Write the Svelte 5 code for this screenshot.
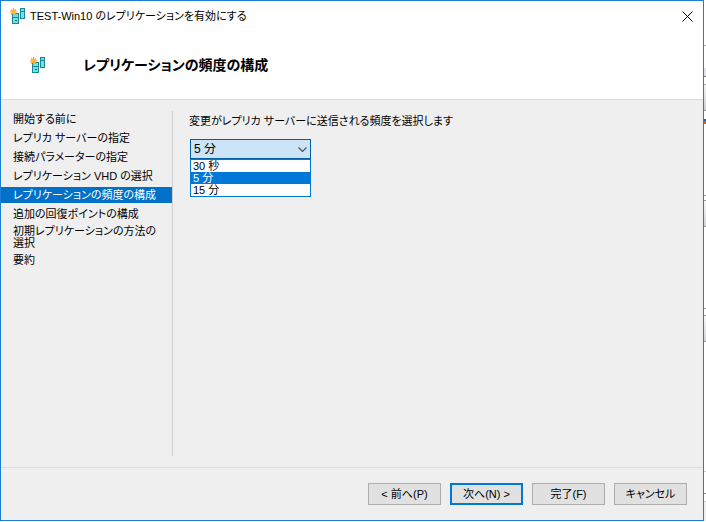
<script lang="ts">
	const steps = [
		"開始する前に",
		"レプリカ サーバーの指定",
		"接続パラメーターの指定",
		"レプリケーション VHD の選択",
		"レプリケーションの頻度の構成",
		"追加の回復ポイントの構成",
		"初期レプリケーションの方法の選択",
		"要約",
	];
	const frequencies = ["30 秒", "5 分", "15 分"];

	let step = $state(4);
	let frequency = $state("5 分");
	let open = $state(true);

	function choose(value: string) {
		frequency = value;
		open = false;
	}
</script>

{#snippet serverIcon()}
	<svg class="server-icon" viewBox="0 0 16 16" aria-hidden="true">
		<rect x="2.5" y="5.5" width="6" height="10" fill="#6be3ec" stroke="#1f8591" />
		<path d="M3 9.5h5" stroke="#1f8591" />
		<rect x="5" y="12" width="2" height="1" fill="#17606b" />
		<rect x="10.5" y="0.5" width="4" height="10" fill="#6be3ec" stroke="#1f8591" />
		<path d="M11 3.5h3" stroke="#1f8591" />
		<path d="M3.5 0v8M0 4h7M1 1.5l5 5M6 1.5l-5 5" stroke="#f2a21f" stroke-width="1.2" />
		<circle cx="3.5" cy="4" r="2" fill="#ffb62e" />
	</svg>
{/snippet}

<div class="desktop">
	<main class="window">
		<div class="titlebar">
			{@render serverIcon()}
			<span class="title">TEST-Win10 のレプリケーションを有効にする</span>
			<button class="close" aria-label="閉じる">
				<svg viewBox="0 0 11 11"><path d="M.5.5l10 10M10.5.5l-10 10" stroke="#000" /></svg>
			</button>
		</div>

		<header>
			{@render serverIcon()}
			<h1>レプリケーションの頻度の構成</h1>
		</header>

		<div class="body">
			<nav>
				{#each steps as name, i}
					<button class="step" class:selected={i === step} onclick={() => (step = i)}>{name}</button>
				{/each}
			</nav>

			<section>
				<label for="frequency">変更がレプリカ サーバーに送信される頻度を選択します</label>
				<div class="combo">
					<select id="frequency" bind:value={frequency} onmousedown={(e) => { e.preventDefault(); open = !open; }}>
						{#each frequencies as f}
							<option>{f}</option>
						{/each}
					</select>
					<svg class="chevron" viewBox="0 0 9 5" aria-hidden="true"><path d="M.5.5l4 4 4-4" fill="none" stroke="#555" stroke-width="1.2" /></svg>
					{#if open}
						<div class="list" role="listbox" aria-label="頻度">
							{#each frequencies as f}
								<button class="option" class:selected={f === frequency} role="option" aria-selected={f === frequency} onclick={() => choose(f)}>{f}</button>
							{/each}
						</div>
					{/if}
				</div>
			</section>
		</div>

		<footer>
			<button class="action">&lt; 前へ(P)</button>
			<button class="action primary">次へ(N) &gt;</button>
			<button class="action">完了(F)</button>
			<button class="action">キャンセル</button>
		</footer>
	</main>
	<div class="behind"></div>
</div>

<style>
	:global(body) {
		background: #fff;
	}

	.desktop {
		display: flex;
		min-height: 100vh;
		box-sizing: border-box;
		padding-bottom: 1px;
		font-family: "Liberation Sans", "Noto Sans CJK JP", sans-serif;
		font-size: 11px;
		line-height: 12px;
		font-feature-settings: "palt"; /* proportional kana, like MS UI Gothic */
		color: #000;
	}

	.window {
		flex: 1;
		display: flex;
		flex-direction: column;
		box-sizing: border-box;
		border: 1px solid #1a7fd6;
		background: #efefef;
	}

	button,
	select {
		box-sizing: border-box;
		margin: 0;
		font: inherit;
		font-feature-settings: inherit;
		color: inherit;
		border-radius: 0;
	}

	.server-icon {
		width: 16px;
		height: 16px;
		flex-shrink: 0;
	}

	.titlebar {
		display: flex;
		align-items: center;
		gap: 4px;
		height: 30px;
		padding-left: 9px;
		background: #fff;
	}

	.title {
		flex: 1;
	}

	.close {
		display: flex;
		align-items: center;
		justify-content: center;
		width: 31px;
		height: 30px;
		padding: 0;
		border: none;
		background: none;
	}

	.close svg {
		width: 11px;
		height: 11px;
	}

	header {
		display: flex;
		align-items: center;
		gap: 37px;
		height: 68px;
		padding-left: 29px;
		background: #fff;
		border-bottom: 1px solid #dcdcdc;
	}

	h1 {
		margin: 0;
		font-size: 14px;
		line-height: 16px;
	}

	.body {
		flex: 1;
		display: flex;
		padding: 11px 0;
	}

	nav {
		display: flex;
		flex-direction: column;
		gap: 3px;
		width: 171px;
		border-right: 1px solid #cfcfcf;
	}

	.step {
		min-height: 16px;
		padding: 0 12px;
		border: none;
		background: none;
		text-align: left;
	}

	.step.selected {
		background: #0070c8;
		color: #fff;
	}

	section {
		flex: 1;
		padding: 4px 16px;
	}

	label {
		display: block;
		margin-bottom: 12px;
	}

	.combo {
		position: relative;
		width: 121px;
		margin-left: 1px;
		font-size: 12px;
	}

	select {
		display: block;
		width: 100%;
		height: 20px;
		padding: 0 3px;
		appearance: none;
		border: 1px solid #0060ab;
		background: #cce4f7;
	}

	.chevron {
		position: absolute;
		top: 8px;
		right: 4px;
		width: 9px;
		height: 5px;
		pointer-events: none;
	}

	.list {
		position: absolute;
		top: 100%;
		left: 0;
		right: 0;
		display: flex;
		flex-direction: column;
		border: 1px solid #0078d7;
		background: #fff;
	}

	.option {
		height: 12px;
		padding: 0 2px;
		border: none;
		background: #fff;
		font-size: 11px;
		text-align: left;
	}

	.option.selected {
		background: #0078d7;
		color: #fff;
	}

	footer {
		display: flex;
		justify-content: flex-end;
		gap: 9px;
		padding: 15px 16px;
		border-top: 1px solid #dcdcdc;
	}

	.action {
		width: 73px;
		height: 22px;
		padding: 0;
		border: 1px solid #adadad;
		background: #e1e1e1;
	}

	.action.primary {
		border: 2px solid #0078d7;
	}

	/* sliver of the window underneath */
	.behind {
		width: 2px;
		background: linear-gradient(
			#fff 45px, #aaa 45px 46px, #fff 46px 68px, #e4e4e8 68px 76px, #777 76px 77px,
			#fff 77px 84px, #aaa 84px 85px, #f4f4f4 85px, #cfcfd2 110px, #999 110px 111px,
			#fff 111px 119px, #2b5fa8 119px 121px, #c8641e 121px 124px, #fff 124px 195px,
			#999 195px 196px, #fff 196px 200px, #999 200px 201px, #f8f8f8 201px, #d4d4d8 226px,
			#999 226px 227px, #fff 227px 308px, #999 308px 309px, #fff 309px 315px,
			#999 315px 316px, #f8f8f8 316px, #d4d4d8 341px, #999 341px 342px, #fff 342px 471px,
			#ccc 471px 472px, #fff 472px 493px, #888 493px 494px, #fff 494px 501px,
			#ccc 501px 502px, #f0f0f0 502px
		);
	}
</style>
